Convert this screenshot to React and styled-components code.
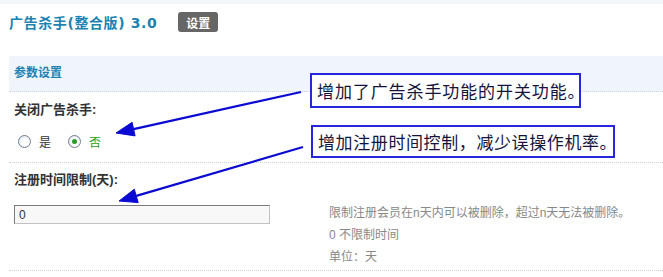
import styled, { createGlobalStyle } from "styled-components";

const GlobalStyle = createGlobalStyle`
    body {
        margin: 0;
        background: #fff;
        font-family: "Liberation Sans", "Noto Sans CJK SC", sans-serif;
        font-size: 12px;
        color: #333;
    }
`;

const Page = styled.div`
    position: relative;
    width: 663px;
    height: 277px;
    overflow: hidden;
`;

const TopStrip = styled.div`
    height: 4px;
    background: #f3f7fb;
`;

const TitleBar = styled.div`
    display: flex;
    align-items: center;
    gap: 21px;
    height: 20px;
    margin-top: 8px;
    padding-left: 9px;
`;

const Title = styled.h1`
    margin: 0;
    font-family: "DejaVu Sans", "Noto Sans CJK SC", sans-serif;
    font-size: 14px;
    font-weight: bold;
    letter-spacing: 0.6px;
    color: #1b82b2;
`;

const Badge = styled.span`
    display: inline-flex;
    align-items: center;
    justify-content: center;
    width: 40px;
    height: 20px;
    border-radius: 3px;
    background: #666;
    color: #fff;
    font-weight: bold;
    font-size: 12px;
`;

const Panel = styled.div`
    margin: 24px 0 0 9px;
`;

const PanelHeader = styled.div`
    height: 35px;
    line-height: 35px;
    padding-left: 5px;
    background: #eff5fb;
    border-bottom: 1px dotted #c9d3dc;
    color: #1b82b2;
    font-weight: bold;
`;

const Row = styled.div`
    padding: ${(p) => p.$pad};
    border-bottom: 1px dotted #c9d3dc;
`;

const Label = styled.div`
    padding-left: 5px;
    line-height: 14px;
    font-size: 13px;
    font-weight: bold;
    color: #333;
`;

const Radios = styled.div`
    display: flex;
    align-items: center;
    height: 14px;
    margin-top: 17px;
    padding-left: 9px;
`;

const RadioOption = styled.label`
    display: inline-flex;
    align-items: center;
    gap: 8px;
    margin-right: 17px;
    color: ${(p) => (p.$checked ? "#1aa01a" : "#333")};
`;

const RadioDot = styled.span`
    position: relative;
    width: 11px;
    height: 11px;
    border: 1px solid #6f7f92;
    border-radius: 50%;
    background: radial-gradient(circle at 60% 60%, #fff 30%, #d8dee6 100%);

    &::after {
        content: "";
        display: ${(p) => (p.$checked ? "block" : "none")};
        position: absolute;
        left: 3px;
        top: 3px;
        width: 5px;
        height: 5px;
        border-radius: 50%;
        background: #2b9a2b;
    }
`;

const Field = styled.div`
    display: flex;
    align-items: flex-start;
    margin-top: 15px;
    padding-left: 5px;
`;

const InputCol = styled.div`
    width: 315px;
    padding-top: 3px;
`;

const TextInput = styled.input`
    box-sizing: border-box;
    width: 256px;
    height: 19px;
    padding: 0 4px;
    border: 1px solid #c2c2c2;
    border-top-color: #7a7a7a;
    border-left-color: #7a7a7a;
    background: #f8f8f8;
    font-family: "Liberation Sans", sans-serif;
    font-size: 12px;
    color: #333;
    outline: none;
`;

const Desc = styled.div`
    line-height: 22px;
    color: #888;
`;

const Note = styled.div`
    position: absolute;
    left: ${(p) => p.$x}px;
    top: ${(p) => p.$y}px;
    box-sizing: border-box;
    width: ${(p) => p.$w}px;
    height: ${(p) => p.$h}px;
    display: flex;
    align-items: center;
    padding-left: 5px;
    border: 2px solid #2626dc;
    background: #fff;
    font-family: "Noto Sans CJK SC", sans-serif;
    font-size: 17px;
    letter-spacing: ${(p) => p.$ls}px;
    color: #14143c;
    white-space: nowrap;
`;

const Arrows = styled.svg`
    position: absolute;
    left: 0;
    top: 0;
    pointer-events: none;
`;

const arrows = [
    { line: [301, 92, 133.6, 129.1], head: "116,133 135.1,135.9 132.1,122.3" },
    { line: [303, 147, 136.3, 195.9], head: "119,201 138.2,202.6 134.3,189.2" },
];

export default function App() {
    return (
        <Page>
            <GlobalStyle />
            <TopStrip />
            <TitleBar>
                <Title>广告杀手(整合版) 3.0</Title>
                <Badge>设置</Badge>
            </TitleBar>

            <Panel>
                <PanelHeader>参数设置</PanelHeader>

                <Row $pad="11px 0 14px">
                    <Label>关闭广告杀手:</Label>
                    <Radios>
                        <RadioOption>
                            <RadioDot />是
                        </RadioOption>
                        <RadioOption $checked>
                            <RadioDot $checked />否
                        </RadioOption>
                    </Radios>
                </Row>

                <Row $pad="10px 0 2px">
                    <Label>注册时间限制(天):</Label>
                    <Field>
                        <InputCol>
                            <TextInput defaultValue="0" />
                        </InputCol>
                        <Desc>
                            <div>限制注册会员在n天内可以被删除，超过n天无法被删除。</div>
                            <div>0 不限制时间</div>
                            <div>单位：天</div>
                        </Desc>
                    </Field>
                </Row>
            </Panel>

            <Note $x={310} $y={73} $w={271} $h={35} $ls={0.9}>
                增加了广告杀手功能的开关功能。
            </Note>
            <Note $x={311} $y={125} $w={304} $h={33} $ls={0.6}>
                增加注册时间控制，减少误操作机率。
            </Note>

            <Arrows width="663" height="277">
                {arrows.map((a, i) => (
                    <g key={i} fill="#0a0ad2" stroke="#0a0ad2">
                        <line x1={a.line[0]} y1={a.line[1]} x2={a.line[2]} y2={a.line[3]} strokeWidth="2.2" />
                        <polygon points={a.head} strokeWidth="1" strokeLinejoin="round" />
                    </g>
                ))}
            </Arrows>
        </Page>
    );
}
